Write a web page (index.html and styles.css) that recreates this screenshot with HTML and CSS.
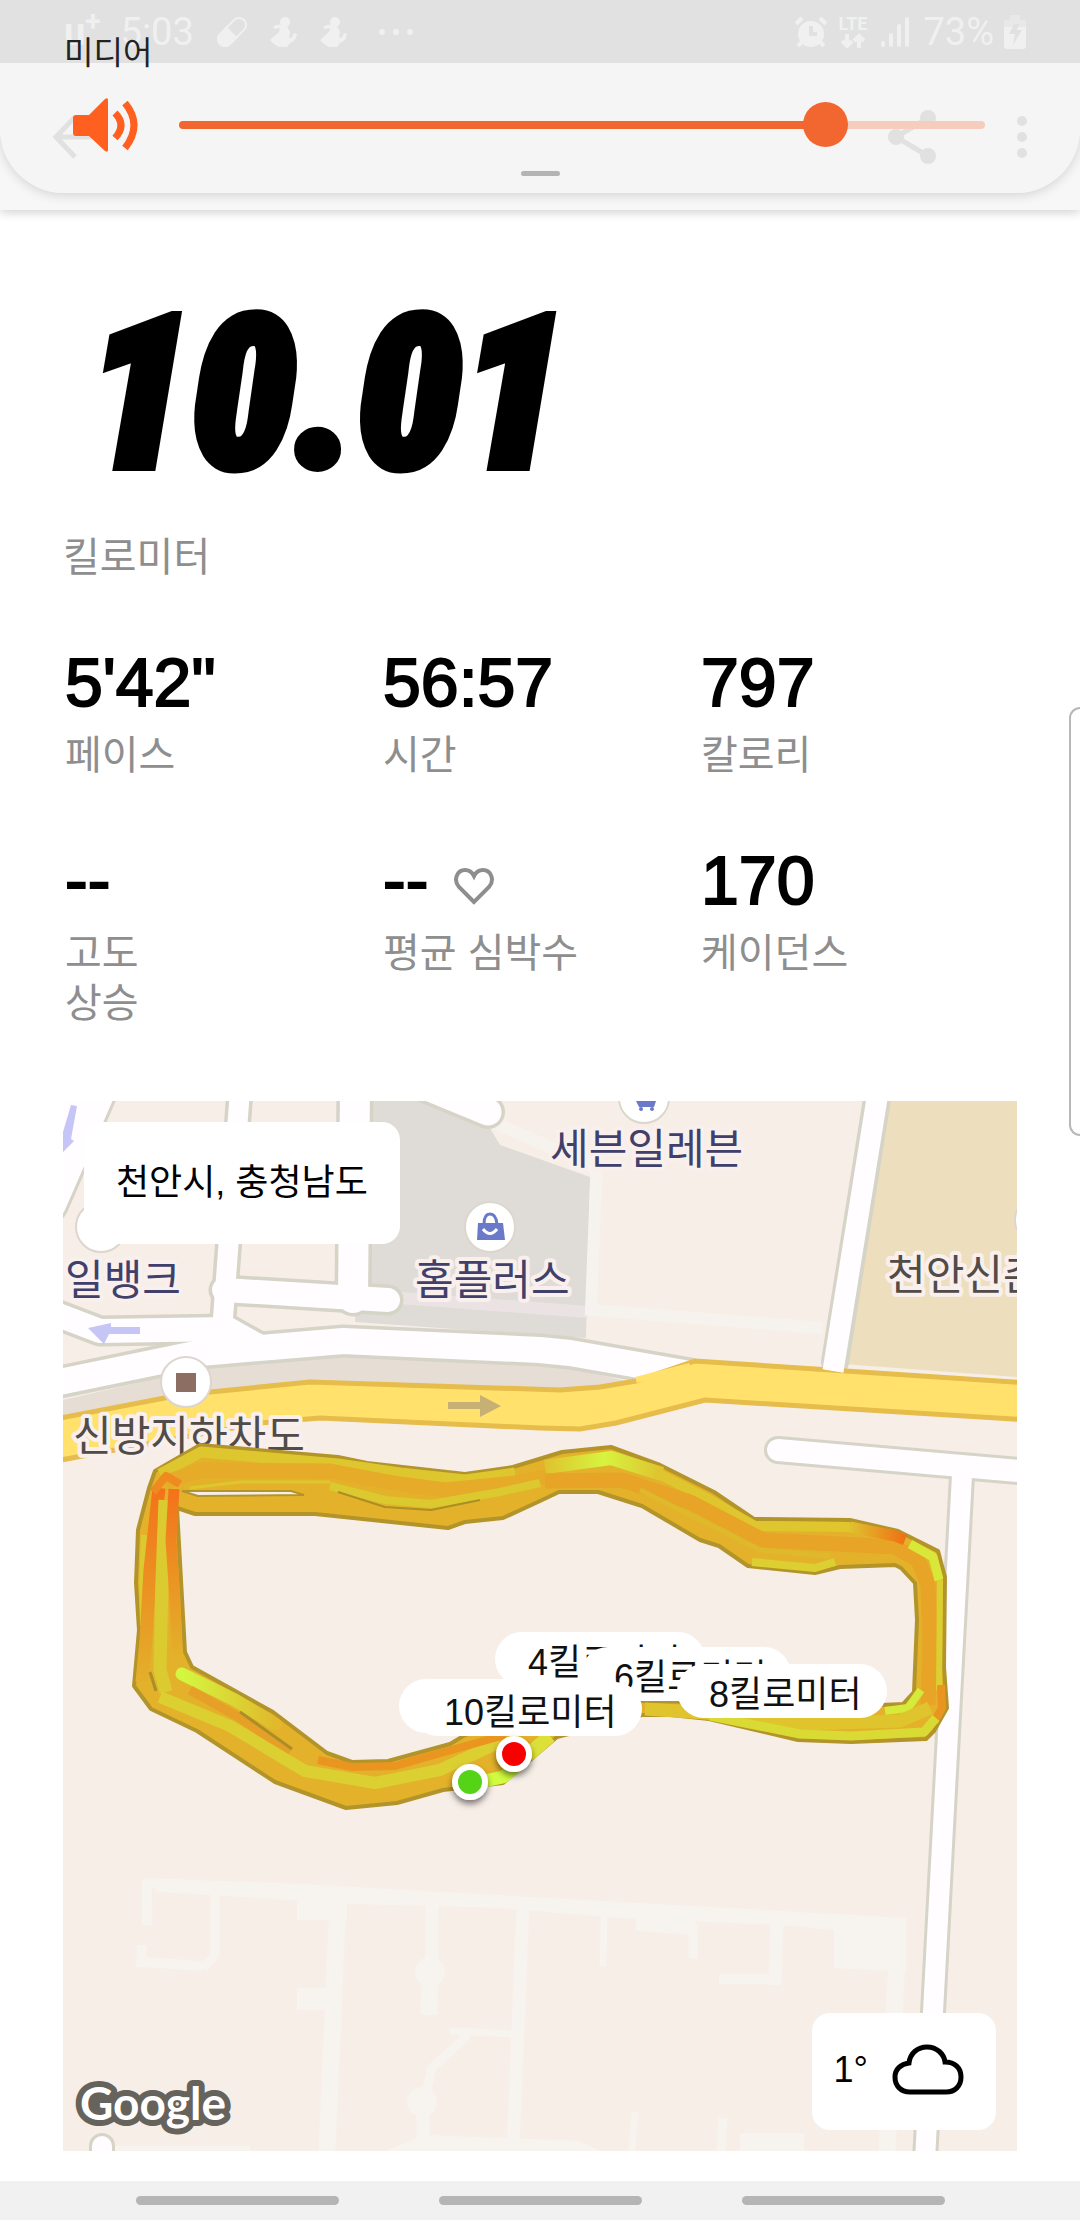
FILE: index.html
```html
<!DOCTYPE html>
<html lang="ko">
<head>
    <meta charset="UTF-8">
    <meta name="viewport" content="width=device-width, initial-scale=1.0">
    <title>러닝 기록</title>
    <link rel="stylesheet" href="styles.css">
</head>
<body>
    <header class="top">
        <div class="status-bar">
            <div class="status-left">
                <span class="carrier">u<sup>+</sup></span>
                <span class="clock">5:03</span>
                <svg class="pill-icon" width="32" height="32" viewBox="0 0 32 32">
                    <g transform="rotate(45 16 16)">
                        <rect x="9" y="-1" width="14" height="34" rx="7" fill="none" stroke="currentColor" stroke-width="2"/>
                        <path d="M8 16h16v10a8 8 0 0 1-16 0z" fill="currentColor"/>
                    </g>
                </svg>
                <svg width="28" height="32" viewBox="0 0 28 32">
                    <circle cx="15" cy="6" r="5" fill="currentColor"/>
                    <path d="M3 11c4-3 10-3 14-1l3 6-1 6c3 0 4-2 5-5l3 1c-1 6-4 8-7 9l-3 4H9c-3-2-6-3-9-7l9-8 1-4-5 1z" fill="currentColor"/>
                </svg>
                <svg width="28" height="32" viewBox="0 0 28 32">
                    <circle cx="15" cy="6" r="5" fill="currentColor"/>
                    <path d="M3 11c4-3 10-3 14-1l3 6-1 6c3 0 4-2 5-5l3 1c-1 6-4 8-7 9l-3 4H9c-3-2-6-3-9-7l9-8 1-4-5 1z" fill="currentColor"/>
                </svg>
                <svg class="more-icon" width="36" height="8" viewBox="0 0 36 8" fill="currentColor">
                    <circle cx="4" cy="4" r="3"/><circle cx="18" cy="4" r="3"/><circle cx="32" cy="4" r="3"/>
                </svg>
            </div>
            <div class="status-right">
                <svg width="34" height="32" viewBox="0 0 34 32" fill="none" stroke="currentColor">
                    <circle cx="17" cy="18" r="13" fill="currentColor" stroke="none"/>
                    <path d="M2 8l6-6M32 8l-6-6M8 26l-4 4M26 26l4 4" stroke-width="4"/>
                    <path class="clock-hand" d="M17 10v8h6" stroke-width="4"/>
                </svg>
                <span class="lte">
                    LTE
                    <svg width="24" height="15" viewBox="0 0 24 15" fill="none" stroke="currentColor" stroke-width="4">
                        <path d="M6 1v11M1 8l5 5 5-5M18 15V3M13 8l5-5 5 5"/>
                    </svg>
                </span>
                <svg width="28" height="32" viewBox="0 0 28 32" fill="currentColor">
                    <rect x="0" y="25" width="4" height="6" rx="2"/>
                    <rect x="8" y="17" width="4" height="14" rx="2"/>
                    <rect x="16" y="8" width="4" height="23" rx="2"/>
                    <rect x="24" y="1" width="4" height="30" rx="2"/>
                </svg>
                <span class="battery-text">73%</span>
                <svg width="22" height="34" viewBox="0 0 22 34" fill="currentColor">
                    <path d="M6 0h10v5h6v7H0V5h6z" opacity="0.5"/>
                    <path d="M0 12h22v19q0 3-3 3H3q-3 0-3-3z"/>
                    <path class="bolt" d="M10 9h5l-2 6h5l-9 15 2-11H5z"/>
                </svg>
            </div>
        </div>
        <div class="app-bar">
            <button type="button" aria-label="뒤로">
                <svg width="46" height="44" viewBox="0 0 46 44" fill="none" stroke="currentColor" stroke-width="5">
                    <path d="M23 2L4 22l19 20M4 22h40"/>
                </svg>
            </button>
            <div class="app-actions">
                <button type="button" aria-label="공유">
                    <svg width="48" height="54" viewBox="0 0 48 54" fill="currentColor">
                        <circle cx="8" cy="27" r="8"/><circle cx="40" cy="8" r="8"/><circle cx="40" cy="46" r="8"/>
                        <path d="M40 8L8 27l32 19" fill="none" stroke="currentColor" stroke-width="5"/>
                    </svg>
                </button>
                <button type="button" aria-label="더보기">
                    <svg width="12" height="44" viewBox="0 0 12 44" fill="currentColor">
                        <circle cx="6" cy="6" r="5"/><circle cx="6" cy="22" r="5"/><circle cx="6" cy="38" r="5"/>
                    </svg>
                </button>
            </div>
        </div>

        <!-- Volume panel slides over the top bars -->
        <div class="volume-panel">
            <label for="volume">미디어</label>
            <div class="volume-row">
                <svg width="68" height="54" viewBox="0 0 68 54" fill="#ff5f1f">
                    <path d="M4 17h13L33 1q3-2 3 1v50q0 3-3 1L17 38H4q-3 0-3-3V20q0-3 3-3z"/>
                    <path d="M43 15q12 12 0 25M53 5q18 22 0 45" fill="none" stroke="#ff5f1f" stroke-width="7"/>
                </svg>
                <input type="range" id="volume" min="0" max="100" value="82">
            </div>
            <div class="panel-handle"></div>
        </div>
    </header>

    <main>
        <section class="summary">
            <h1>10.01</h1>
            <p class="label">킬로미터</p>
        </section>

        <section class="stats">
            <div class="stat">
                <div class="value">5'42"</div>
                <p class="label">페이스</p>
            </div>
            <div class="stat">
                <div class="value">56:57</div>
                <p class="label">시간</p>
            </div>
            <div class="stat">
                <div class="value">797</div>
                <p class="label">칼로리</p>
            </div>
            <div class="stat">
                <div class="value">--</div>
                <p class="label">고도<br>상승</p>
            </div>
            <div class="stat">
                <div class="value">--
                    <svg class="heart" width="40" height="38" viewBox="0 0 40 38" fill="none" stroke="#8e8e8e" stroke-width="4">
                        <path d="M20 35L5 20C-1 13 3 3 11 3c4 0 7 2 9 6 2-4 5-6 9-6 8 0 12 10 6 17z"/>
                    </svg>
                </div>
                <p class="label">평균 심박수</p>
            </div>
            <div class="stat">
                <div class="value">170</div>
                <p class="label">케이던스</p>
            </div>
        </section>

        <section class="map">
            <svg class="map-canvas" viewBox="63 1101 954 1050">
                <defs>
                    <linearGradient id="hotDown" x1="0" y1="0" x2="0" y2="1">
                        <stop offset="0" stop-color="#f4721a"/>
                        <stop offset="1" stop-color="#e3b02a"/>
                    </linearGradient>
                    <linearGradient id="hotRight">
                        <stop offset="0" stop-color="#dfc22e"/>
                        <stop offset="1" stop-color="#f07014"/>
                    </linearGradient>
                    <linearGradient id="peak">
                        <stop offset="0" stop-color="#dfc22e"/>
                        <stop offset="0.5" stop-color="#d6f440"/>
                        <stop offset="1" stop-color="#dfc22e"/>
                    </linearGradient>
                    <linearGradient id="limeFade">
                        <stop offset="0" stop-color="#d3f740"/>
                        <stop offset="1" stop-color="#e1b92b"/>
                    </linearGradient>
                    <filter id="pinShadow" x="-50%" y="-50%" width="200%" height="200%">
                        <feDropShadow dx="0" dy="4" stdDeviation="3" flood-opacity="0.5"/>
                    </filter>
                </defs>

                <!-- Areas -->
                <rect x="63" y="1101" width="954" height="1050" fill="#f7eee8"/>
                <path d="M370 1101H430L490 1128 500 1145 590 1177 586 1338 540 1335 355 1322z" fill="#dfdcd7"/>
                <path d="M400 1298L588 1312" stroke="#ebe3e3" stroke-width="12"/>
                <path d="M492 1122L590 1164Q598 1170 596 1184L591 1310 822 1328" fill="none" stroke="#f6f3ee" stroke-width="12"/>
                <path d="M888 1101H1017V1377L843 1364z" fill="#eddfbd"/>
                <path d="M63 1400L210 1366 343 1355 560 1366 636 1383 560 1391 320 1383 63 1420z" fill="#e6ddd5"/>

                <!-- Building outlines at the bottom -->
                <g fill="#f7f3ee">
                    <path d="M144 1878L301 1884 906 1918V1972L834 1968V1930L777 1925 620 1918 500 1908 353 1904 158 1892z"/>
                    <rect x="297" y="1890" width="50" height="30"/>
                    <rect x="297" y="1988" width="32" height="22"/>
                    <rect x="740" y="2133" width="64" height="18"/>
                    <rect x="115" y="2146" width="135" height="5"/>
                    <path d="M636 1915h60v20l-60-4zM385 2151L425 2135 580 2141 600 2151z"/>
                    <circle cx="430" cy="1972" r="15"/>
                    <circle cx="422" cy="2102" r="15"/>
                </g>
                <g fill="none" stroke="#f7f3ee">
                    <path d="M147 1880V1925M142 1945L141 1962 203 1966M719 1979H781" stroke-width="10"/>
                    <path d="M215 1895V1955L203 1968M693 1925V1958M468 2035L432 2068 424 2100M723 2118L721 2151" stroke-width="9"/>
                    <path d="M338 1900L327 2151M897 1960L887 2151M430 1975L429 2015" stroke-width="17"/>
                    <path d="M432 1900V1972M523 1905L513 2151M777 1920L775 1985M423 2100V2145" stroke-width="13"/>
                    <path d="M604 1915L603 1966M450 2031L515 2034M635 2112L632 2151" stroke-width="7"/>
                </g>

                <!-- Roads: casing first, fill on top -->
                <g fill="none" stroke="#d6d3c7" stroke-linecap="round" stroke-linejoin="round">
                    <path d="M90 1090L42 1200" stroke-width="56"/>
                    <path d="M240 1090L223 1318" stroke-width="27"/>
                    <path d="M355 1090L353 1298" stroke-width="37"/>
                    <path d="M224 1290L388 1300" stroke-width="31"/>
                    <path d="M420 1084L488 1112" stroke-width="34"/>
                    <path d="M50 1312L100 1331 228 1329 262 1348" stroke-width="31"/>
                    <path d="M50 1384L200 1353 343 1341 540 1350 570 1353 690 1374" stroke-width="33"/>
                    <path d="M880 1080L835 1362" stroke-width="28"/>
                    <path d="M778 1450L1030 1472" stroke-width="28"/>
                    <path d="M962 1475L925 2160" stroke-width="26"/>
                    <path d="M102 2146V2170" stroke-width="26"/>
                </g>
                <g fill="none" stroke="#fffdff" stroke-linecap="round" stroke-linejoin="round">
                    <path d="M90 1090L42 1200" stroke-width="50"/>
                    <path d="M240 1090L223 1318" stroke-width="20"/>
                    <path d="M355 1090L353 1298" stroke-width="30"/>
                    <path d="M224 1290L388 1300" stroke-width="24"/>
                    <path d="M420 1084L488 1112" stroke-width="27"/>
                    <path d="M50 1312L100 1331 228 1329 262 1348" stroke-width="24"/>
                    <path d="M50 1384L200 1353 343 1341 540 1350 570 1353 690 1374" stroke-width="26"/>
                    <path d="M778 1450L1030 1472" stroke-width="22"/>
                    <path d="M962 1475L925 2160" stroke-width="20"/>
                    <path d="M102 2146V2170" stroke-width="20"/>
                </g>
                <path d="M50 1420L180 1395 310 1382 560 1390 600 1387 636 1381 695 1361 1030 1383V1420L705 1400 616 1423 580 1429 540 1428 320 1418 260 1423 50 1462z" fill="#ffe16c" stroke="#e6bc4b" stroke-width="5"/>
                <path d="M690 1366L636 1380" stroke="#ffe16c" stroke-width="6"/>
                <path d="M880 1080L833 1371" stroke="#fffdff" stroke-width="21"/>

                <!-- One-way arrows -->
                <path d="M448 1402H480V1395L501 1406 480 1417V1409H448z" fill="#c6b074"/>
                <path d="M140 1327H111V1323L88 1328 104 1344 109 1334H140z" fill="#c5c6f5"/>
                <path d="M71 1105L77 1106 71 1139 74 1141 63 1152V1132z" fill="#c5c6f5"/>

                <!-- Places -->
                <g class="poi">
                    <circle cx="490" cy="1227" r="25"/>
                    <circle cx="644" cy="1098" r="25"/>
                    <circle cx="186" cy="1382" r="25"/>
                    <circle cx="101" cy="1227" r="25"/>
                    <circle cx="1040" cy="1220" r="25"/>
                </g>
                <path d="M478 1223h25l2 17h-28z" fill="#6b79c9"/>
                <path d="M484 1224q0-10 6-10t7 10" fill="none" stroke="#6b79c9" stroke-width="3"/>
                <path d="M483 1229q7 9 14 0" fill="none" stroke="#fff" stroke-width="3"/>
                <path d="M636 1101h20l-2 6h-15z" fill="#6b79c9"/>
                <circle cx="641" cy="1109" r="2" fill="#6b79c9"/>
                <circle cx="652" cy="1109" r="2" fill="#6b79c9"/>
                <rect x="176" y="1373" width="20" height="19" fill="#8d6e63"/>
                <text class="place" x="550" y="1164">세븐일레븐</text>
                <text class="place" x="415" y="1295">홈플러스</text>
                <text class="place" x="65" y="1295">일뱅크</text>
                <text class="place place-dark" x="887" y="1290">천안신촌</text>
                <text class="place place-dark" x="73" y="1451">신방지하차도</text>

                <!-- Route -->
                <path d="M200 1445L155 1471 149 1488 138 1530 136 1583 139 1630 134 1686 151 1709 197 1731 275 1782 346 1808 397 1803 443 1790 503 1783 557 1737 642 1715 671 1715 709 1719 798 1740 851 1742 926 1739 934 1731 947 1708 944 1667 945 1577 938 1551 898 1531 850 1520 754 1519 714 1492 660 1465 611 1447 562 1452 513 1467 465 1474 367 1463 338 1457z
                    M177 1508L195 1514 315 1514 448 1528 465 1522 503 1518 540 1501 559 1492 598 1492 642 1506 700 1540 719 1546 748 1566 815 1573 840 1567 895 1565 901 1568 915 1583 917 1620 914 1692 903 1704 881 1705 643 1701 560 1700 465 1735 450 1744 388 1761 352 1762 327 1753 273 1712 192 1667 185 1652z" fill="#e3b22a" fill-rule="evenodd" stroke="#b3942a" stroke-width="4" stroke-linejoin="round"/>
                <g fill="none" stroke-linejoin="round">
                    <path d="M160 1474L201 1452 338 1464 400 1473 465 1480 515 1473" stroke="#dec72e" stroke-width="11"/>
                    <path d="M166 1482L202 1470 330 1471 400 1484 445 1490 515 1483 565 1473" stroke="#e6ab28" stroke-width="15"/>
                    <path d="M330 1486L385 1500 431 1504 500 1492 540 1483" stroke="#dcc92f" stroke-width="8"/>
                    <path d="M338 1492L385 1507 431 1510 480 1500" stroke="#a98f25" stroke-width="2"/>
                    <path d="M190 1488L240 1482 330 1482" stroke="#dec72e" stroke-width="3"/>
                    <path d="M144 1535L142 1583 143 1625" stroke="#dcc92f" stroke-width="6"/>
                    <path d="M159 1488L150 1570 146 1640 142 1682" stroke="url(#hotDown)" stroke-width="13"/>
                    <path d="M165 1500L162 1580 160 1670 166 1692" stroke="#dccb30" stroke-width="13"/>
                    <path d="M174 1489L171 1540 175 1600 177 1655" stroke="url(#hotDown)" stroke-width="11"/>
                    <path d="M153 1492L166 1476 180 1484" stroke="#ef8a20" stroke-width="8"/>
                    <path d="M150 1672L156 1691" stroke="#a98f25" stroke-width="3"/>
                    <path d="M182 1674L235 1700 275 1724" stroke="url(#limeFade)" stroke-width="13" stroke-linecap="round"/>
                    <path d="M190 1690L240 1718 290 1752" stroke="#e6a027" stroke-width="9"/>
                    <path d="M240 1712L292 1749" stroke="#a98f25" stroke-width="3"/>
                    <path d="M160 1697L230 1726 305 1771 375 1783 440 1770 500 1742" stroke="#dccf32" stroke-width="12"/>
                    <path d="M318 1760L352 1767 395 1766 455 1749 505 1735" stroke="#e9951f" stroke-width="8"/>
                    <path d="M470 1784L503 1777 522 1762" stroke="#d0fc40" stroke-width="13"/>
                    <path d="M528 1755L550 1736" stroke="#dce038" stroke-width="14"/>
                    <path d="M545 1467L611 1458 662 1474" stroke="url(#peak)" stroke-width="14"/>
                    <path d="M655 1472L710 1500 755 1526 850 1527" stroke="#dfc62e" stroke-width="10"/>
                    <path d="M545 1481L622 1480 690 1502 763 1540 895 1547 918 1560 928 1585 930 1640 928 1705" stroke="#e7a426" stroke-width="15"/>
                    <path d="M640 1490L700 1520 760 1550 830 1556" stroke="#dfb92c" stroke-width="5"/>
                    <path d="M752 1562L815 1568 835 1562" stroke="#dccf32" stroke-width="8"/>
                    <path d="M850 1527L895 1536 905 1540" stroke="url(#hotRight)" stroke-width="11"/>
                    <path d="M910 1544L933 1557 939 1580" stroke="#d9e838" stroke-width="9"/>
                    <path d="M940 1580L939 1690" stroke="#dccf32" stroke-width="6"/>
                    <path d="M941 1685L942 1708 934 1722" stroke="#e9951f" stroke-width="8"/>
                    <path d="M885 1711L908 1708 921 1690" stroke="#d6ea3a" stroke-width="8"/>
                    <path d="M645 1709L720 1714 800 1724 900 1721 930 1708" stroke="#e0c42d" stroke-width="13"/>
                    <path d="M710 1716L800 1734 851 1736 924 1732 936 1718" stroke="#dada34" stroke-width="9"/>
                </g>
                <path d="M182 1491L198 1496 304 1495 291 1491z" fill="#f7eee8" stroke="#b3942a" stroke-width="2"/>

                <!-- Kilometre markers -->
                <g class="km">
                    <rect x="495" y="1632" width="210" height="54" rx="27"/>
                    <text x="528" y="1675">4킬로미터</text>
                    <rect x="581" y="1647" width="210" height="54" rx="27"/>
                    <text x="614" y="1690">6킬로미터</text>
                    <rect x="677" y="1664" width="210" height="54" rx="27"/>
                    <text x="709" y="1707">8킬로미터</text>
                    <rect x="399" y="1679" width="210" height="54" rx="27"/>
                    <rect x="411" y="1682" width="231" height="54" rx="27"/>
                    <text x="444" y="1725">10킬로미터</text>
                </g>
                <g stroke="#fff" stroke-width="6" filter="url(#pinShadow)">
                    <circle cx="470" cy="1782" r="15" fill="#54d318"/>
                    <circle cx="514" cy="1754" r="15" fill="#f80000"/>
                </g>
                <text class="google" x="80" y="2120">Google</text>
            </svg>
            <div class="map-card place-card">천안시, 충청남도</div>
            <div class="map-card weather-card">
                <span>1°</span>
                <svg width="72" height="52" viewBox="0 0 72 52" fill="none" stroke="#000" stroke-width="5">
                    <path d="M18 48C8 48 3 41 3 33c0-8 6-13 14-14C18 9 26 3 35 3c10 0 17 7 18 15 10 0 16 6 16 15s-6 15-15 15z"/>
                </svg>
            </div>
        </section>
    </main>

    <div class="edge-panel"></div>

    <nav class="nav-bar">
        <button type="button" aria-label="최근 앱"></button>
        <button type="button" aria-label="홈"></button>
        <button type="button" aria-label="뒤로"></button>
    </nav>
</body>
</html>
```
FILE: styles.css
```css
* {
    box-sizing: border-box;
    margin: 0;
    padding: 0;
}

body {
    position: relative;
    display: flex;
    flex-direction: column;
    min-height: 100vh;
    overflow-x: hidden;
    background-color: #fff;
    color: #000;
    font-family: 'Liberation Sans', 'Noto Sans CJK KR', sans-serif;
}

button {
    border: none;
    background: none;
    color: inherit;
    cursor: pointer;
}

svg {
    display: block;
    flex-shrink: 0;
}

/* Status bar and app bar */
.top {
    position: relative;
    background-color: #f7f7f7;
    box-shadow: 0 2px 10px rgba(0, 0, 0, 0.2);
}

.status-bar {
    display: flex;
    justify-content: space-between;
    height: 63px;
    padding: 0 54px 0 64px;
    background-color: #707070;
    color: #d8d8d8;
    font-family: Roboto, sans-serif;
    font-size: 38px;
}

.status-left,
.status-right {
    display: flex;
    align-items: center;
}

.status-left {
    gap: 22px;
}

.status-right {
    gap: 10px;
}

.carrier {
    font-weight: bold;
    margin-right: -2px;
}

.carrier sup {
    font-size: 28px;
    line-height: 20px;
}

.more-icon {
    margin-left: 8px;
}

.clock-hand {
    stroke: #707070;
}

.bolt {
    fill: #707070;
}

.lte {
    display: flex;
    flex-direction: column;
    align-items: center;
    margin-right: 4px;
    font-size: 18px;
    font-weight: bold;
    line-height: 18px;
}

.battery-text {
    margin-left: 4px;
}

.app-bar {
    display: flex;
    align-items: center;
    justify-content: space-between;
    height: 147px;
    padding: 0 52px;
    color: #707070;
}

.app-actions {
    display: flex;
    align-items: center;
    gap: 80px;
}

/* Volume panel */
.volume-panel {
    position: absolute;
    top: 0;
    left: 0;
    width: 100%;
    padding: 34px 0 17px;
    background-color: rgba(245, 245, 245, 0.85);
    border-radius: 0 0 64px 64px;
    box-shadow: 0 2px 12px rgba(0, 0, 0, 0.15);
}

.volume-panel label {
    display: block;
    margin-left: 64px;
    font-size: 32px;
    line-height: 38px;
    color: #222;
}

.volume-row {
    display: flex;
    align-items: center;
    gap: 39px;
    height: 50px;
    margin-top: 28px;
    padding: 0 95px 0 72px;
}

.volume-row input {
    flex: 1;
    min-width: 0;
    height: 46px;
    appearance: none;
    background: none;
}

.volume-row input::-webkit-slider-runnable-track {
    height: 8px;
    border-radius: 4px;
    background: linear-gradient(to right, #f1672f 80%, #f6cdbd 80%);
}

.volume-row input::-webkit-slider-thumb {
    appearance: none;
    width: 45px;
    height: 45px;
    margin-top: -19px;
    border-radius: 50%;
    background-color: #f1672f;
}

.panel-handle {
    width: 39px;
    height: 5px;
    margin: 21px auto 0;
    border-radius: 3px;
    background-color: #b4b4b4;
}

/* Run summary */
main {
    flex: 1;
    padding: 0 63px 30px;
}

.summary {
    padding-top: 74px;
}

h1 {
    margin-left: 24px;
    font-family: 'Roboto Condensed', Roboto, sans-serif;
    font-size: 210px;
    font-style: italic;
    font-weight: 900;
    line-height: 220px;
    -webkit-text-stroke: 10px #000;
}

.label {
    font-size: 40px;
    line-height: 50px;
    color: #8e8e8e;
}

.summary .label {
    margin-top: 28px;
}

.stats {
    display: grid;
    grid-template-columns: repeat(3, 1fr);
    row-gap: 60px;
    margin-top: 60px;
}

.stat {
    padding-left: 2px;
}

.value {
    display: flex;
    align-items: center;
    gap: 26px;
    height: 80px;
    margin-bottom: 8px;
    font-size: 68px;
    -webkit-text-stroke: 2px #000;
}

.heart {
    margin-top: 12px;
}

/* Map */
.map {
    position: relative;
    margin-top: 73px;
}

.map-canvas {
    width: 100%;
    height: auto;
}

.poi {
    fill: #fff;
    stroke: #ddd6cf;
    stroke-width: 2px;
}

.place {
    font-family: 'Noto Sans CJK KR', sans-serif;
    font-size: 42px;
    fill: #40406a;
    stroke: #f9f0ee;
    stroke-width: 8px;
    stroke-linejoin: round;
    paint-order: stroke;
}

.place-dark {
    fill: #514c48;
}

.km {
    font-size: 36px;
    fill: #fff;
}

.km text {
    fill: #111;
}

.google {
    font-family: Lato, sans-serif;
    font-size: 46px;
    font-weight: bold;
    fill: #fff;
    stroke: #66625c;
    stroke-width: 12px;
    stroke-linejoin: round;
    paint-order: stroke;
}

.map-card {
    position: absolute;
    display: flex;
    align-items: center;
    justify-content: center;
    border-radius: 18px;
    background-color: #fff;
    font-size: 36px;
}

.place-card {
    top: 21px;
    left: 21px;
    height: 122px;
    padding: 0 32px 8px;
}

.weather-card {
    right: 21px;
    bottom: 21px;
    gap: 24px;
    height: 117px;
    padding: 0 32px 4px 22px;
}

/* Handle of the edge panel */
.edge-panel {
    position: absolute;
    top: 707px;
    right: 0;
    width: 11px;
    height: 429px;
    border: 2px solid #b8b8b8;
    border-right: none;
    border-radius: 16px 0 0 16px;
}

.nav-bar {
    display: flex;
    align-items: center;
    justify-content: center;
    gap: 100px;
    height: 39px;
    background-color: #f1f1f1;
}

.nav-bar button {
    width: 203px;
    height: 9px;
    border-radius: 5px;
    background-color: #b5b5b5;
}
```
